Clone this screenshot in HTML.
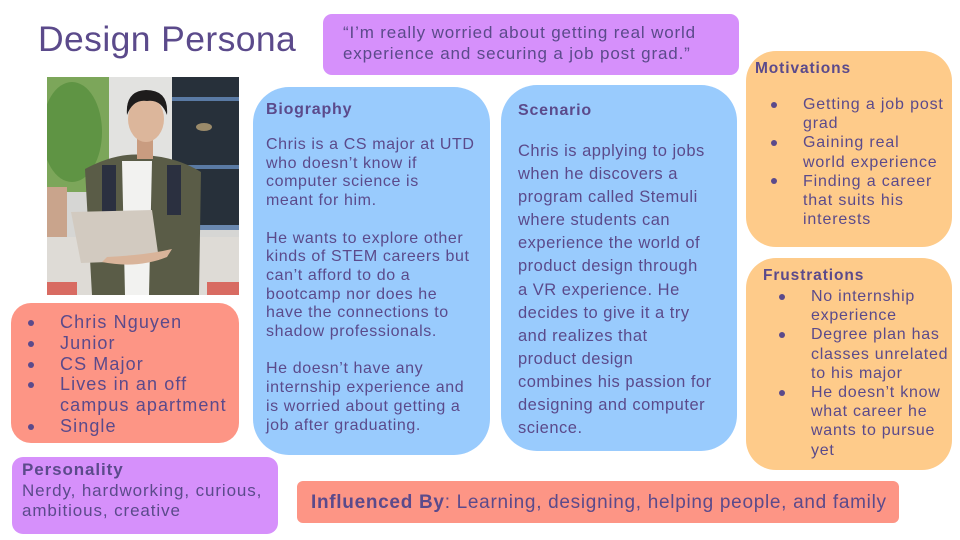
<!DOCTYPE html>
<html><head><meta charset="utf-8"><style>
*{margin:0;padding:0;box-sizing:border-box}
body{width:960px;height:540px;background:#fff;position:relative;overflow:hidden;font-family:"Liberation Sans",sans-serif;color:#5b4a8b}
.b{position:absolute}
.t{position:absolute;white-space:nowrap}
b{font-weight:700}
.dot{position:absolute;width:6px;height:6px;border-radius:50%;background:#5b4a8b}
</style></head><body>
<div class="t" style="left:38px;top:19px;font-size:35.5px;letter-spacing:0.4px">Design Persona</div>

<div class="b" style="left:323px;top:14px;width:416px;height:61px;background:#d690fb;border-radius:9px"></div>
<div class="t" style="left:343px;top:22px;font-size:17px;line-height:21px;letter-spacing:0.85px">“I’m really worried about getting real world<br>experience and securing a job post grad.”</div>

<svg class="b" style="left:47px;top:77px" width="192" height="218" viewBox="0 0 192 218">
<rect width="192" height="218" fill="#d6d6d4"/>
<rect x="60" y="0" width="65" height="160" fill="#e2e2e0"/>
<rect x="0" y="0" width="62" height="115" fill="#7ca65a"/>
<ellipse cx="25" cy="55" rx="30" ry="50" fill="#5f9444"/>
<rect x="0" y="110" width="20" height="55" fill="#c9a48c"/>
<rect x="125" y="0" width="67" height="150" fill="#27303a"/>
<rect x="125" y="20" width="67" height="4" fill="#5a7aa4"/>
<rect x="125" y="88" width="67" height="4" fill="#5a7aa4"/>
<rect x="125" y="148" width="67" height="5" fill="#6a88b0"/>
<ellipse cx="157" cy="50" rx="8" ry="4" fill="#9a8a6a"/>
<rect x="0" y="160" width="192" height="58" fill="#dedbd6"/>
<rect x="0" y="205" width="30" height="13" fill="#d86b62"/>
<rect x="160" y="205" width="32" height="13" fill="#d86b62"/>
<path d="M38 92 Q70 75 97 78 Q130 80 154 95 L152 218 L45 218 Z" fill="#5a5c47"/>
<rect x="55" y="88" width="14" height="50" fill="#2b3040"/>
<rect x="120" y="88" width="14" height="50" fill="#2b3040"/>
<path d="M75 84 L105 84 L102 218 L78 218 Z" fill="#f2f2f0"/>
<rect x="90" y="60" width="16" height="22" fill="#c99c80"/>
<ellipse cx="99" cy="42" rx="18" ry="23" fill="#dcb69b"/>
<path d="M80 38 Q78 14 99 13 Q122 13 120 38 Q114 22 100 24 Q86 22 80 38 Z" fill="#1e1c1c"/>
<polygon points="24,135 105,133 112,183 34,186" fill="#d2cac0"/>
<path d="M55 185 Q90 192 120 180 L125 172 Q100 178 60 180 Z" fill="#d9b49a"/>
</svg>

<div class="b" style="left:253px;top:87px;width:237px;height:368px;background:#99cbfd;border-radius:36px"></div>
<div class="t" style="left:266px;top:101px;font-size:16px;font-weight:700;letter-spacing:0.8px">Biography</div>
<div class="t" style="left:266px;top:136px;font-size:16px;line-height:18.7px;letter-spacing:0.6px">Chris is a CS major at UTD<br>who doesn’t know if<br>computer science is<br>meant for him.<br><br>He wants to explore other<br>kinds of STEM careers but<br>can’t afford to do a<br>bootcamp nor does he<br>have the connections to<br>shadow professionals.<br><br>He doesn’t have any<br>internship experience and<br>is worried about getting a<br>job after graduating.</div>

<div class="b" style="left:501px;top:85px;width:236px;height:366px;background:#99cbfd;border-radius:36px"></div>
<div class="t" style="left:518px;top:102px;font-size:16px;font-weight:700;letter-spacing:0.8px">Scenario</div>
<div class="t" style="left:518px;top:140px;font-size:16.5px;line-height:23.1px;letter-spacing:0.5px">Chris is applying to jobs<br>when he discovers a<br>program called Stemuli<br>where students can<br>experience the world of<br>product design through<br>a VR experience. He<br>decides to give it a try<br>and realizes that<br>product design<br>combines his passion for<br>designing and computer<br>science.</div>

<div class="b" style="left:746px;top:51px;width:206px;height:196px;background:#fecb8a;border-radius:30px"></div>
<div class="t" style="left:755px;top:60px;font-size:15.5px;font-weight:700;letter-spacing:0.9px">Motivations</div>
<div class="dot" style="left:771px;top:102px"></div>
<div class="dot" style="left:771px;top:140px"></div>
<div class="dot" style="left:771px;top:178px"></div>
<div class="t" style="left:803px;top:95px;font-size:16px;line-height:19.2px;letter-spacing:0.85px">Getting a job post<br>grad<br>Gaining real<br>world experience<br>Finding a career<br>that suits his<br>interests</div>

<div class="b" style="left:746px;top:258px;width:206px;height:212px;background:#fecb8a;border-radius:30px"></div>
<div class="t" style="left:763px;top:267px;font-size:15.5px;font-weight:700;letter-spacing:0.9px">Frustrations</div>
<div class="dot" style="left:779px;top:294px"></div>
<div class="dot" style="left:779px;top:332px"></div>
<div class="dot" style="left:779px;top:390px"></div>
<div class="t" style="left:811px;top:287px;font-size:16px;line-height:19.2px;letter-spacing:0.75px">No internship<br>experience<br>Degree plan has<br>classes unrelated<br>to his major<br>He doesn’t know<br>what career he<br>wants to pursue<br>yet</div>

<div class="b" style="left:11px;top:303px;width:228px;height:140px;background:#fd9585;border-radius:20px"></div>
<div class="dot" style="left:28px;top:320px"></div>
<div class="dot" style="left:28px;top:341px"></div>
<div class="dot" style="left:28px;top:362px"></div>
<div class="dot" style="left:28px;top:382px"></div>
<div class="dot" style="left:28px;top:424px"></div>
<div class="t" style="left:60px;top:312px;font-size:18px;line-height:20.8px;letter-spacing:1.1px">Chris Nguyen<br>Junior<br>CS Major<br>Lives in an off<br>campus apartment<br>Single</div>

<div class="b" style="left:12px;top:457px;width:266px;height:77px;background:#d690fb;border-radius:11px"></div>
<div class="t" style="left:22px;top:460px;font-size:17px;line-height:20.5px;letter-spacing:0.9px"><b>Personality</b><br>Nerdy, hardworking, curious,<br>ambitious, creative</div>

<div class="b" style="left:297px;top:481px;width:602px;height:42px;background:#fd9585;border-radius:6px"></div>
<div class="t" style="left:311px;top:492px;font-size:19px;letter-spacing:0.7px"><b>Influenced By</b>: Learning, designing, helping people, and family</div>
</body></html>
